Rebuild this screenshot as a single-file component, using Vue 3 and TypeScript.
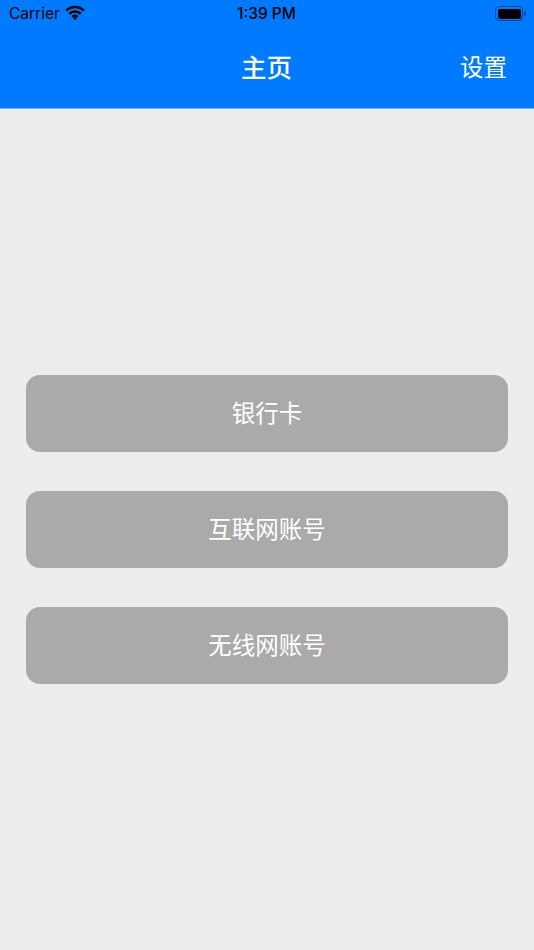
<script setup lang="ts">
const items: string[] = ['银行卡', '互联网账号', '无线网账号']
</script>

<template>
  <div class="page">
    <header class="header">
      <div class="status">
        <div class="status-left">
          <span class="carrier">Carrier</span>
          <svg class="wifi" width="20" height="15" viewBox="0 0 20 15" fill="none" stroke="#000" stroke-width="2.7">
            <path d="M1.2 5.6 A12.6 12.6 0 0 1 18.8 5.6" />
            <path d="M4.3 8.8 A8.2 8.2 0 0 1 15.7 8.8" />
            <path d="M7.3 11.8 A3.9 3.9 0 0 1 12.7 11.8" stroke-width="2.4" />
            <path d="M8 12.9 L10 15 L12 12.9 A2.8 2.8 0 0 0 8 12.9 Z" fill="#000" stroke="none" />
          </svg>
        </div>
        <span class="time">1:39 PM</span>
        <div class="battery">
          <div class="battery-body"><div class="battery-fill"></div></div>
          <div class="battery-cap"></div>
        </div>
      </div>
      <div class="nav">
        <h1 class="title">主页</h1>
        <span class="action">设置</span>
      </div>
    </header>
    <main class="main">
      <button v-for="item in items" :key="item" class="item" type="button">{{ item }}</button>
    </main>
  </div>
</template>

<style scoped>
.page {
  width: 534px;
  height: 950px;
  display: flex;
  flex-direction: column;
  background: #ededed;
  font-family: "Noto Sans CJK SC", "Liberation Sans", sans-serif;
  overflow: hidden;
}
.header {
  height: 109px;
  box-sizing: border-box;
  flex: none;
  background: #007aff;
  border-bottom: 1px solid #77b4f6;
  display: flex;
  flex-direction: column;
}
.status {
  height: 27px;
  flex: none;
  display: grid;
  grid-template-columns: 1fr auto 1fr;
  align-items: center;
  padding: 0 8px 0 9px;
  color: #000;
  font-family: Inter, "Liberation Sans", sans-serif;
}
.status-left {
  display: flex;
  align-items: center;
  gap: 5px;
}
.carrier {
  font-size: 15.5px;
}
.wifi {
  display: block;
  margin-top: -2px;
}
.time {
  font-size: 15.5px;
  font-weight: 500;
  margin-left: -2px;
}
.battery {
  justify-self: end;
  display: flex;
  align-items: center;
  gap: 1px;
}
.battery-body {
  width: 28px;
  height: 15px;
  box-sizing: border-box;
  border: 1.5px solid rgba(0, 0, 0, 0.42);
  border-radius: 4px;
  padding: 1.5px;
}
.battery-fill {
  height: 100%;
  background: #000;
  border-radius: 2px;
}
.battery-cap {
  width: 2px;
  height: 5px;
  background: rgba(0, 0, 0, 0.42);
  border-radius: 0 2px 2px 0;
}
.nav {
  flex: 1;
  position: relative;
  display: flex;
  align-items: center;
  justify-content: center;
  color: #fff;
  padding-bottom: 4px;
}
.title {
  margin: 0;
  font-size: 25.5px;
  font-weight: 500;
  line-height: 36px;
  transform: translateX(-0.5px);
}
.action {
  position: absolute;
  right: 27px;
  top: 50%;
  transform: translateY(-50%);
  margin-top: -2px;
  font-size: 23.5px;
  line-height: 32px;
  font-weight: 400;
}
.main {
  flex: 1;
  display: flex;
  flex-direction: column;
  justify-content: center;
  gap: 39px;
  padding: 0 26px;
}
.item {
  height: 77px;
  border: none;
  border-radius: 14px;
  background: #aaaaaa;
  color: #fff;
  font-family: inherit;
  font-size: 23.5px;
  font-weight: 400;
  padding: 0 0 4px;
}
</style>
